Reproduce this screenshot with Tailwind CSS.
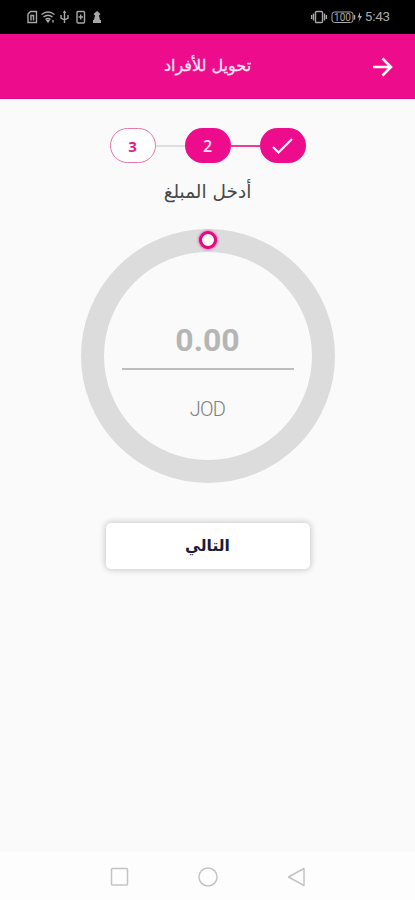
<!DOCTYPE html>
<html lang="ar" dir="rtl">
<head>
  <meta charset="UTF-8">
  <title>تحويل للأفراد</title>
  <script src="https://cdn.jsdelivr.net/npm/@tailwindcss/browser@4"></script>
</head>
<body class="bg-[#fafafa] font-['DejaVu_Sans',sans-serif]">

  <div class="w-[415px] h-[900px] flex flex-col overflow-hidden">
    <!-- شريط الحالة -->
    <div dir="ltr" class="h-[34px] shrink-0 bg-black text-[#a8a8a8] flex items-center justify-between pl-[27px] pr-[25px]">
      <svg width="76" height="14" viewBox="0 0 76 14" fill="none" stroke="currentColor" stroke-width="1.400">
        <path d="M1 12.500V4L3.500 1.500H9.500V12.500Z M4 10.500V5.500H6.500V10.500" />
        <path d="M14.500 4.500Q21 -.5 27.500 4.500 M16.500 7Q21 3.500 25.500 7 M18.500 9.500Q21 7.500 23.500 9.500" />
        <path d="M20 10.500L21 12L22 10.500Z M26 10V12.500" />
        <path d="M37.500 1.500V13 M34 5V8L37.500 10L41 8V5 M36.500 3L37.500 1.500L38.500 3" />
        <rect x="50" y="1.500" width="7.500" height="11.500" rx="1" />
        <path d="M53.700 4.500V9.500 M51.500 7H56" />
        <path d="M70 1L73.500 4L72 5.500L73 10H74V13H66V10H67L68 5.500L66.500 4Z" fill="currentColor" stroke="none" />
      </svg>
      <div class="flex items-center gap-[2px]">
        <svg width="52" height="14" viewBox="0 0 52 14" fill="none" stroke="currentColor" stroke-width="1.400">
          <rect x="4.500" y="1.500" width="7" height="11" rx="1" />
          <path d="M2.500 3.500V10.500 M.6 5V9 M13.500 3.500V10.500 M15.400 5V9" />
          <rect x="21" y="2" width="21" height="10.500" rx="2.500" stroke-width="1" />
          <path d="M43.500 5V9.500" stroke-width="1.500" />
          <text x="31.500" y="10.900" text-anchor="middle" font-family="Roboto" font-size="10" fill="currentColor" stroke="none">100</text>
          <path d="M49 2L46.500 7.500H48.500L47.500 12L51 6H49Z" fill="currentColor" stroke="none" />
        </svg>
        <span class="font-['Roboto'] text-[13.500px] leading-none tracking-[-0.2px]">5:43</span>
      </div>
    </div>

    <!-- العنوان -->
    <div class="h-[65px] shrink-0 bg-[#ec0c8c] border-b border-[#d80b80] text-white grid grid-cols-[60px_1fr_60px] items-center">
      <svg class="mr-[22px] mt-[2px]" width="21" height="20" viewBox="0 0 21 20" fill="none" stroke="currentColor" stroke-width="2.500">
        <path d="M1 10H18.500 M10.500 1.500L19 10L10.500 18.500" />
      </svg>
      <h1 class="text-center text-[16px] leading-6 text-[#ffe4f3] whitespace-nowrap [-webkit-text-stroke:0.3px]">تحويل للأفراد</h1>
    </div>

    <!-- الخطوات -->
    <div class="mt-[29px] flex items-center justify-center font-['Open_Sans'] font-semibold text-[16px]">
      <div class="w-[46px] h-[35px] rounded-full bg-[#ec0c8c] flex items-center justify-center">
        <svg width="21" height="16" viewBox="0 0 21 16" fill="none" stroke="white" stroke-width="2.200">
          <path d="M1 9L6.500 14.500L20 1" />
        </svg>
      </div>
      <div class="w-[29px] h-[2px] bg-[#ec3a9f]"></div>
      <div class="w-[46px] h-[35px] rounded-full bg-[#ec0c8c] text-[#ffe4f3] flex items-center justify-center pt-px">2</div>
      <div class="w-[29px] h-[2px] bg-[#dedede]"></div>
      <div class="w-[46px] h-[35px] rounded-full bg-white border border-[#e874ab] text-[#e01b85] font-bold text-[15px] flex items-center justify-center pt-px">3</div>
    </div>
    <h2 class="mt-[14px] h-[30px] text-center text-[18.500px] leading-[30px] text-[#484848]">أدخل المبلغ</h2>

    <!-- المبلغ -->
    <div class="relative mt-[22px] mx-auto w-[254px] h-[254px] shrink-0 rounded-full border-[23px] border-[#dcdcdc] flex flex-col items-center font-['Roboto']">
      <div class="absolute left-1/2 -top-[21px] -ml-[9px] size-[18px] rounded-full bg-white border-[3px] border-[#e5087f] shadow-[0_0_3px_#ec0c8c]"></div>
      <div class="mt-[66px] h-[42px] text-[32px] leading-[44px] font-bold text-[#b5b5b5]">0.00</div>
      <div class="mt-[8px] w-[172px] h-[2px] bg-[#bdbdbd]"></div>
      <div class="mt-[24px] text-[20px] leading-[30px] font-light tracking-[-0.8px] text-[#808080]">JOD</div>
    </div>

    <button class="mt-[40px] mx-auto w-[204px] h-[46px] shrink-0 rounded-[5px] bg-white text-[#1c1c3a] text-[15.500px] font-bold shadow-[0_0_6px_1px_#00000033] flex items-center justify-center pt-0.5">التالي</button>

    <!-- أزرار النظام -->
    <div dir="ltr" class="mt-auto h-[48px] shrink-0 bg-[#fdfdfd] flex items-center justify-center gap-[69px] pt-[2px] text-[#c4c4c4]">
      <svg width="19" height="20" viewBox="0 0 19 20" fill="none" stroke="currentColor" stroke-width="1.500"><rect x="1.500" y="1.500" width="16" height="16.500" rx="1" /></svg>
      <svg width="20" height="20" viewBox="0 0 20 20" fill="none" stroke="currentColor" stroke-width="1.500"><circle cx="10" cy="10" r="9" /></svg>
      <svg width="19" height="20" viewBox="0 0 19 20" fill="none" stroke="currentColor" stroke-width="1.500" stroke-linejoin="round"><path d="M17 1.500V18.500L1.500 10Z" /></svg>
    </div>
  </div>

</body>
</html>
